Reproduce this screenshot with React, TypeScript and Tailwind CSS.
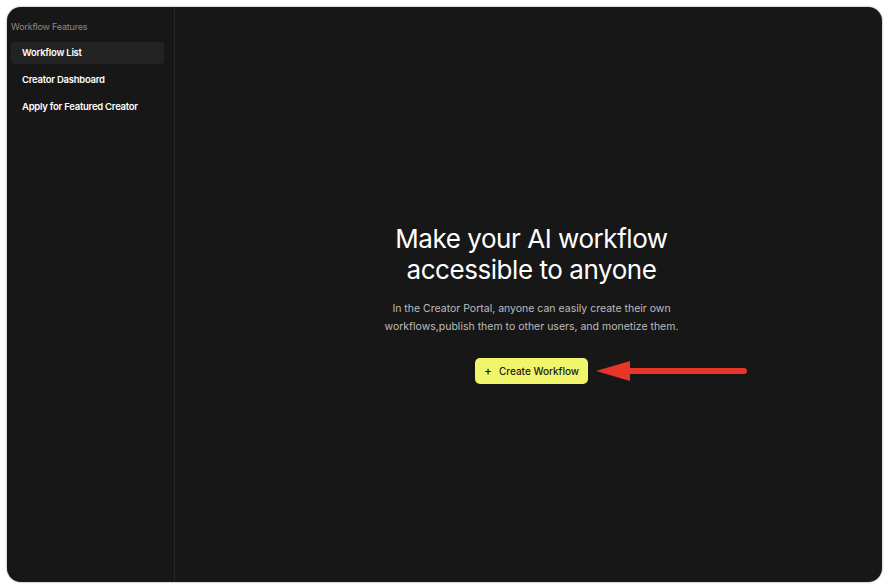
const items = ["Workflow List", "Creator Dashboard", "Apply for Featured Creator"];

function Arrow() {
  return (
    <svg width="152" height="24" viewBox="0 0 152 24" className="absolute left-[121px] top-1/2 -translate-y-1/2">
      <line x1="30" y1="12" x2="148" y2="12" stroke="#e8352a" strokeWidth="6" strokeLinecap="round" />
      <polygon points="0,12 34,2 34,22" fill="#e8352a" />
    </svg>
  );
}

export default function App() {
  return (
    <div className="w-[886px] h-[585px] bg-white p-[7px] pr-[4px] pb-[3px]" style={{ fontFamily: "Inter, 'Noto Sans', sans-serif" }}>
      <div className="flex h-full w-full overflow-hidden rounded-[14px] bg-[#171717] shadow-[0_0_2px_rgba(0,0,0,0.5)]">
        <aside className="w-[168px] shrink-0 border-r border-[#262626] pt-[15px] pl-[4px] pr-[10px]">
          <div className="text-[9px] text-[#8a8a8a] leading-none mb-[11px] tracking-[-0.2px]">Workflow Features</div>
          <nav className="flex flex-col gap-[5px]">
            {items.map((item, i) => (
              <div
                key={item}
                className={`h-[22px] flex items-center rounded-[4px] px-[11px] text-[9.5px] font-semibold text-white tracking-[-0.25px] ${i === 0 ? "bg-[#232323]" : ""}`}
              >
                {item}
              </div>
            ))}
          </nav>
        </aside>
        <main className="flex-1 flex flex-col items-center pt-[216px] pl-[6px]">
          <h1 className="text-[26px] leading-[31px] text-white text-center font-normal tracking-[-0.45px]">
            Make your AI workflow
            <br />
            accessible to anyone
          </h1>
          <p className="mt-[15px] text-[10.5px] leading-[18px] text-[#bdbdbd] text-center">
            In the Creator Portal, anyone can easily create their own
            <br />
            workflows,publish them to other users, and monetize them.
          </p>
          <div className="relative mt-[22px]">
            <button className="h-[26px] w-[113px] rounded-[5px] bg-[#f1f56b] flex items-center justify-center gap-[7px] text-[10px] font-medium text-[#1a1a1a]">
              <span className="text-[12px] leading-none">+</span>
              Create Workflow
            </button>
            <Arrow />
          </div>
        </main>
      </div>
    </div>
  );
}
